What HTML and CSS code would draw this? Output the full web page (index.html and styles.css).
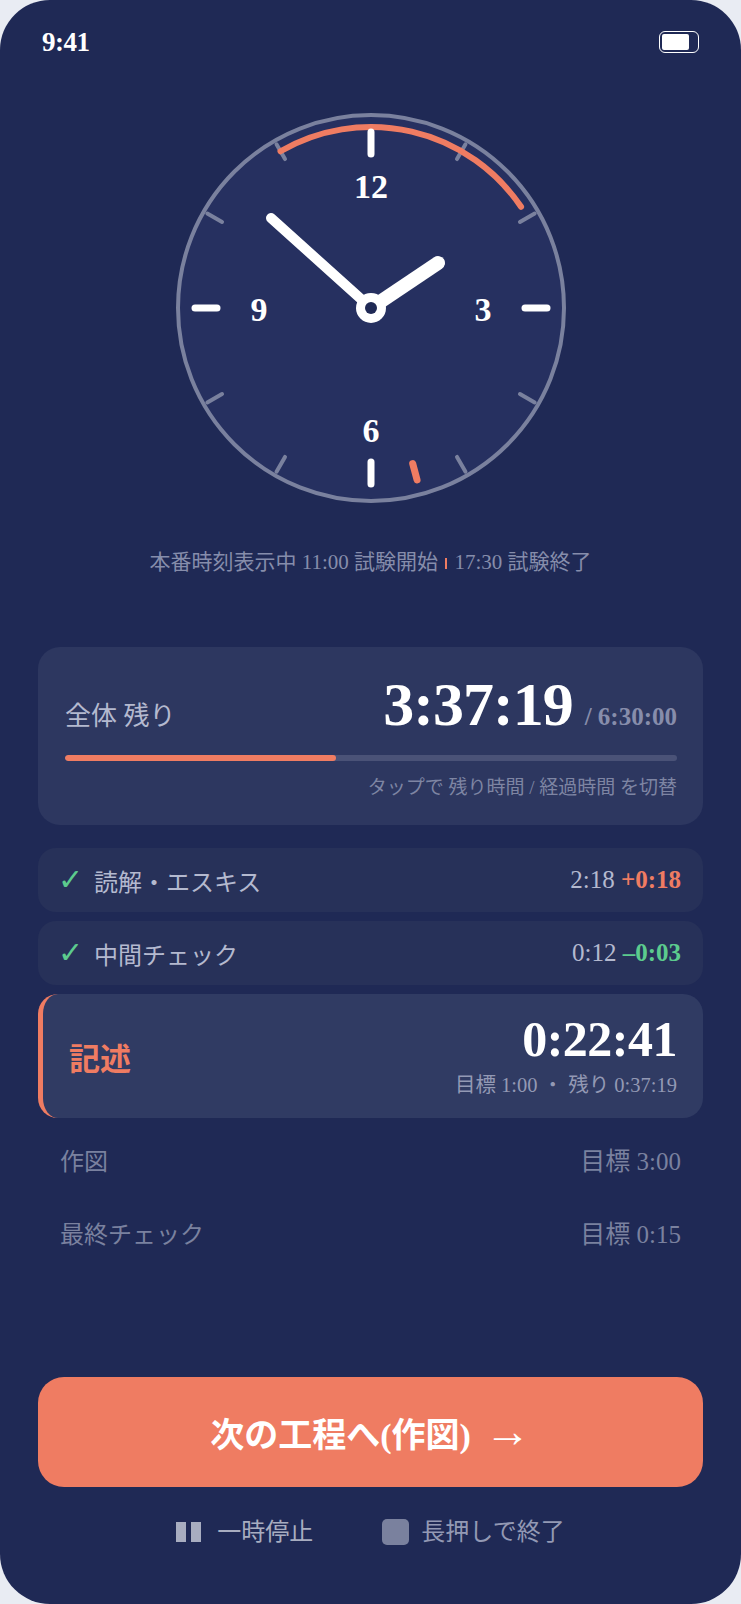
FILE: index.html
```html
<!DOCTYPE html>
<html lang="ja">
<head>
  <meta charset="UTF-8">
  <meta name="viewport" content="width=device-width, initial-scale=1">
  <title>試験タイマー</title>
  <link rel="stylesheet" href="styles.css">
</head>
<body>
  <div class="phone">
    <div class="status-bar">
      <span class="clock-time">9:41</span>
      <span class="battery"><span class="battery-fill"></span></span>
    </div>

    <svg class="dial" width="400" height="400" viewBox="-200 -200 400 400">
      <circle class="face" cx="0" cy="0" r="193"></circle>

      <!-- minor ticks -->
      <g class="tick-minor">
        <line x1="0" y1="-172" x2="0" y2="-189" transform="rotate(30)"></line>
        <line x1="0" y1="-172" x2="0" y2="-189" transform="rotate(60)"></line>
        <line x1="0" y1="-172" x2="0" y2="-189" transform="rotate(120)"></line>
        <line x1="0" y1="-172" x2="0" y2="-189" transform="rotate(150)"></line>
        <line x1="0" y1="-172" x2="0" y2="-189" transform="rotate(210)"></line>
        <line x1="0" y1="-172" x2="0" y2="-189" transform="rotate(240)"></line>
        <line x1="0" y1="-172" x2="0" y2="-189" transform="rotate(300)"></line>
        <line x1="0" y1="-172" x2="0" y2="-189" transform="rotate(330)"></line>
      </g>

      <!-- exam window 11:00 -> now -->
      <path class="arc" d="M -90.5 -156.75 A 181 181 0 0 1 150.06 -101.2"></path>

      <!-- major ticks -->
      <g class="tick-major">
        <line x1="0" y1="-154" x2="0" y2="-176"></line>
        <line x1="0" y1="-154" x2="0" y2="-176" transform="rotate(90)"></line>
        <line x1="0" y1="-154" x2="0" y2="-176" transform="rotate(180)"></line>
        <line x1="0" y1="-154" x2="0" y2="-176" transform="rotate(270)"></line>
      </g>
      <line class="tick-end" x1="0" y1="-161" x2="0" y2="-178" transform="rotate(165)"></line>

      <g class="numerals">
        <text x="0" y="-110">12</text>
        <text x="112" y="13">3</text>
        <text x="0" y="134">6</text>
        <text x="-112" y="13">9</text>
      </g>

      <line class="hand-min" x1="0" y1="0" x2="-100" y2="-90"></line>
      <line class="hand-hour" x1="0" y1="0" x2="67" y2="-45"></line>
      <circle class="pin" cx="0" cy="0" r="15"></circle>
      <circle class="pin-hole" cx="0" cy="0" r="6"></circle>
    </svg>

    <p class="caption">本番時刻表示中 11:00 試験開始<span class="sep"></span>17:30 試験終了</p>

    <div class="overall">
      <div class="overall-top">
        <span class="overall-label">全体 残り</span>
        <span class="overall-time">3:37:19<span class="overall-total">/ 6:30:00</span></span>
      </div>
      <div class="progress"><div class="progress-fill" style="width: 44.3%"></div></div>
      <div class="hint">タップで 残り時間 / 経過時間 を切替</div>
    </div>

    <div class="steps">
      <div class="step done">
        <span class="check">✓</span>
        <span class="step-name">読解・エスキス</span>
        <span class="step-right">2:18 <b class="over">+0:18</b></span>
      </div>
      <div class="step done">
        <span class="check">✓</span>
        <span class="step-name">中間チェック</span>
        <span class="step-right">0:12 <b class="under">–0:03</b></span>
      </div>
      <div class="step active">
        <span class="active-name">記述</span>
        <div class="active-right">
          <div class="active-time">0:22:41</div>
          <div class="active-sub">目標 1:00 ・ 残り 0:37:19</div>
        </div>
      </div>
      <div class="step pending">
        <span class="step-name">作図</span>
        <span class="step-right">目標 3:00</span>
      </div>
      <div class="step pending">
        <span class="step-name">最終チェック</span>
        <span class="step-right">目標 0:15</span>
      </div>
    </div>

    <button class="next-btn">次の工程へ(作図)<span class="arrow">→</span></button>

    <div class="controls">
      <span class="ctrl pause"><span class="pause-icon"><i></i><i></i></span>一時停止</span>
      <span class="ctrl stop"><span class="stop-icon"></span>長押しで終了</span>
    </div>
  </div>
</body>
</html>
```

FILE: styles.css
```css
* {
  box-sizing: border-box;
}
body {
  margin: 0;
  background: #e9ecf3;
  font-family: "Liberation Serif", "Noto Sans CJK JP", serif;
}
.phone {
  width: 741px;
  height: 1604px;
  background: #1f2955;
  border-radius: 50px;
  padding: 0 38px;
  overflow: hidden;
}

/* status bar */
.status-bar {
  display: flex;
  justify-content: space-between;
  align-items: center;
  height: 63px;
  padding: 21px 4px 0;
}
.clock-time {
  color: #fff;
  font-weight: bold;
  font-size: 27px;
  letter-spacing: -0.5px;
  line-height: 1;
}
.battery {
  display: block;
  width: 40px;
  height: 22px;
  border: 1.5px solid #fff;
  border-radius: 6px;
  padding: 2px;
}
.battery-fill {
  display: block;
  width: 27px;
  height: 100%;
  background: #fff;
  border-radius: 2px;
}

/* dial */
.dial {
  display: block;
  margin: 45px auto 0;
}
.face {
  fill: #263060;
  stroke: #7a819e;
  stroke-width: 4;
}
.tick-minor line {
  stroke: #7a819e;
  stroke-width: 4;
  stroke-linecap: round;
}
.tick-major line {
  stroke: #fff;
  stroke-width: 7;
  stroke-linecap: round;
}
.tick-end {
  stroke: #ef7c62;
  stroke-width: 7;
  stroke-linecap: round;
}
.arc {
  fill: none;
  stroke: #ef7c62;
  stroke-width: 6;
  stroke-linecap: round;
}
.numerals text {
  fill: #fff;
  font-family: "Liberation Serif", serif;
  font-weight: bold;
  font-size: 34px;
  text-anchor: middle;
}
.hand-hour {
  stroke: #fff;
  stroke-width: 14;
  stroke-linecap: round;
}
.hand-min {
  stroke: #fff;
  stroke-width: 10;
  stroke-linecap: round;
}
.pin {
  fill: #fff;
}
.pin-hole {
  fill: #1f2955;
}

.caption {
  margin: 40px 0 0;
  text-align: center;
  color: #868dab;
  font-size: 21px;
  line-height: 28px;
}
.sep {
  display: inline-block;
  width: 2.5px;
  height: 11px;
  background: #ef7c62;
  margin: 0 7px;
}

/* overall card */
.overall {
  margin-top: 71px;
  background: #2d3760;
  border-radius: 22px;
  padding: 26px 26px 24px 27px;
}
.overall-top {
  display: flex;
  justify-content: space-between;
  align-items: baseline;
}
.overall-label {
  color: #b4b9cf;
  font-size: 26px;
  line-height: 1;
}
.overall-time {
  color: #fff;
  font-weight: bold;
  font-size: 62px;
  line-height: 62px;
  letter-spacing: -1px;
}
.overall-total {
  color: #878dab;
  font-size: 25px;
  line-height: 1;
  letter-spacing: 0;
  margin-left: 12px;
}
.progress {
  margin-top: 20px;
  height: 6px;
  border-radius: 3px;
  background: #4a5277;
  overflow: hidden;
}
.progress-fill {
  height: 100%;
  background: #ef7c62;
  border-radius: 3px;
}
.hint {
  margin-top: 14px;
  text-align: right;
  color: #7e85a3;
  font-size: 19px;
  line-height: 26px;
}

/* steps */
.steps {
  margin-top: 23px;
  display: flex;
  flex-direction: column;
  gap: 9px;
}
.step {
  display: flex;
  align-items: center;
  height: 64px;
  padding: 0 22px;
  border-radius: 18px;
  font-size: 24px;
}
.step.done {
  background: #273159;
  color: #b4b9cf;
}
.check {
  color: #5ccb8e;
  font-family: "DejaVu Sans", sans-serif;
  font-weight: bold;
  font-size: 30px;
  line-height: 1;
  width: 36px;
  margin-left: -2px;
}
.step-right {
  margin-left: auto;
  font-size: 25px;
}
.step b {
  font-weight: bold;
}
.over {
  color: #ef7c62;
}
.under {
  color: #5ccb8e;
}
.step.active {
  height: 124px;
  background: #303b63;
  border-left: 5px solid #ef7c62;
  border-radius: 20px;
  padding: 0 26px 0 26px;
}
.active-name {
  color: #ef7c62;
  font-weight: bold;
  font-size: 31px;
}
.active-right {
  margin-left: auto;
  text-align: right;
}
.active-time {
  color: #fff;
  font-weight: bold;
  font-size: 50px;
  line-height: 50px;
  letter-spacing: -0.5px;
}
.active-sub {
  margin-top: 8px;
  color: #9399b4;
  font-size: 20.5px;
  line-height: 26px;
}
.step.pending {
  color: #7a819f;
}

/* bottom */
.next-btn {
  display: flex;
  justify-content: center;
  align-items: center;
  width: 100%;
  height: 110px;
  margin-top: 113px;
  border: none;
  border-radius: 26px;
  background: #ef7c62;
  color: #fff;
  font-family: inherit;
  font-weight: bold;
  font-size: 34px;
}
.arrow {
  font-size: 46px;
  line-height: 1;
  margin-left: 14px;
}
.controls {
  margin-top: 32px;
  display: flex;
  justify-content: center;
  gap: 69px;
  font-size: 24px;
  line-height: 26px;
}
.ctrl {
  display: flex;
  align-items: center;
}
.pause {
  color: #a8adc0;
}
.pause-icon {
  display: flex;
  gap: 5px;
  margin-right: 16px;
}
.pause-icon i {
  display: block;
  width: 10px;
  height: 20px;
  background: #a8adc0;
}
.stop {
  color: #9399b4;
}
.stop-icon {
  width: 27px;
  height: 26px;
  border-radius: 5px;
  background: #7a819e;
  margin-right: 12px;
}
```
